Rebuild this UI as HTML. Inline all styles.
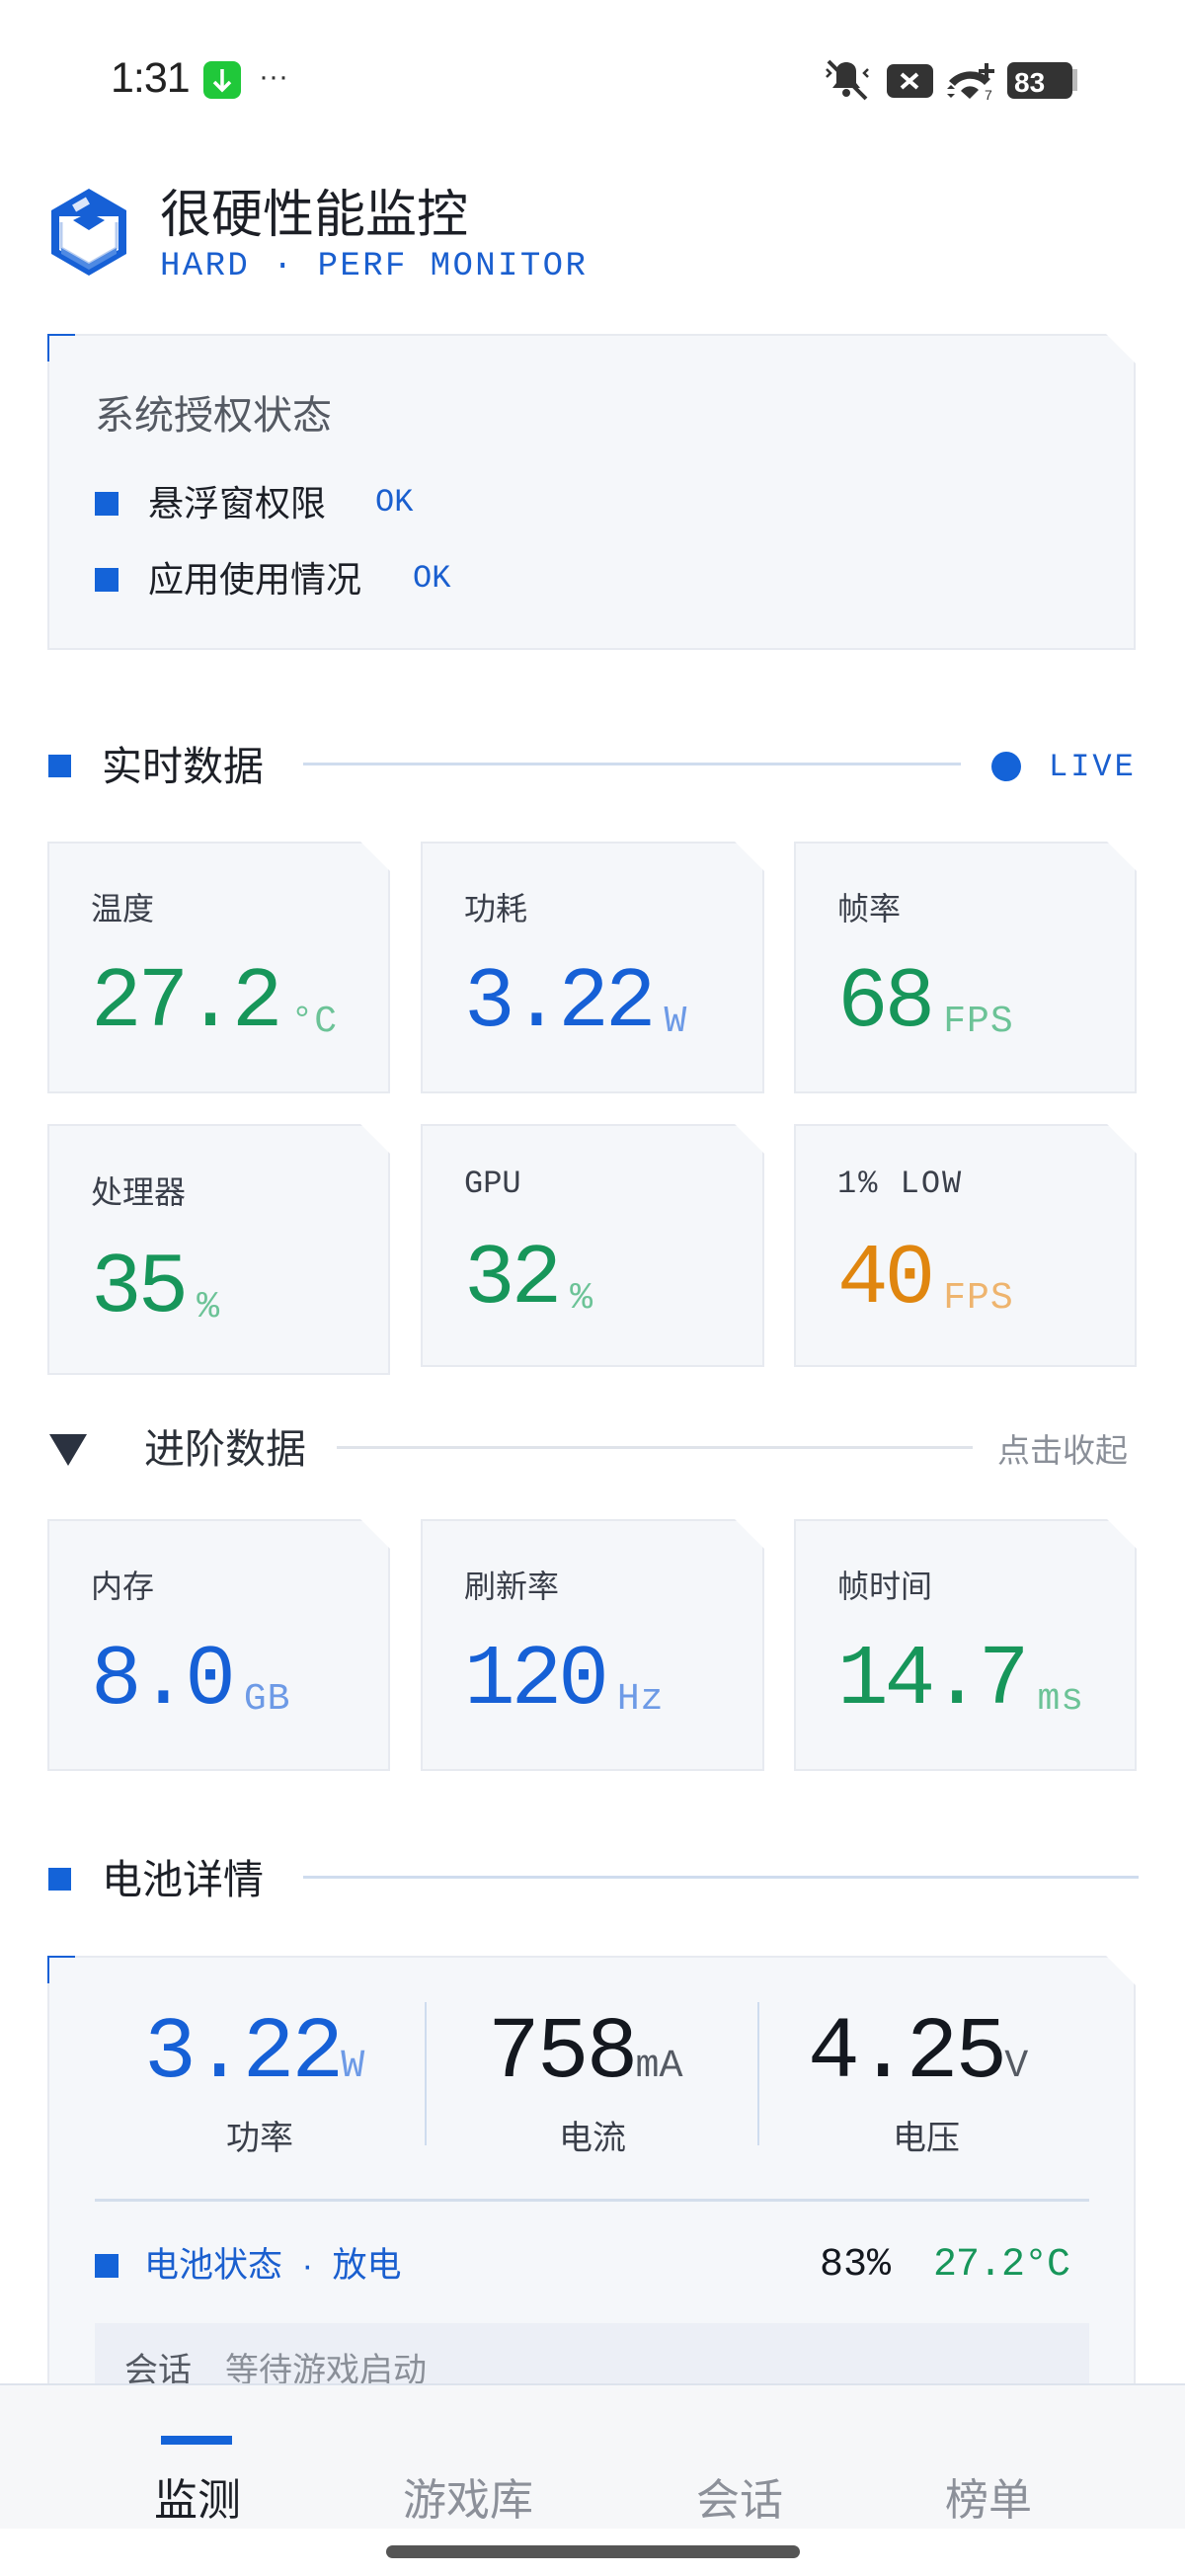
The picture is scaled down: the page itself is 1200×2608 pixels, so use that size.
<!DOCTYPE html>
<html><head><meta charset="utf-8">
<style>
*{margin:0;padding:0;box-sizing:border-box}
body{width:1200px;height:2608px;background:#fff;position:relative;overflow:hidden;font-family:"Liberation Sans","Noto Sans CJK SC",sans-serif;color:#1c1f26;line-height:1.2}
.a{position:absolute}
.mono{font-family:"Liberation Mono","Noto Sans CJK SC",monospace}
.card{position:absolute;background:#f5f7fa;border:2px solid #e7eaf0;clip-path:polygon(0 0,calc(100% - 30px) 0,100% 30px,100% 100%,0 100%)}
.lbl{position:absolute;left:42px;top:47px;font-size:32px;color:#3a3f4a}
.val{position:absolute;left:42px;top:118px;font-size:86px;letter-spacing:-4px;line-height:1;white-space:nowrap;font-family:"Liberation Mono",monospace}
.val span{font-size:38px;letter-spacing:1px;margin-left:12px;position:relative;top:6px}
.g{color:#17965a}.g span{color:#6cc397}
.b{color:#1660d6}.b span{color:#6d9ae6}
.o{color:#e0860f}.o span{color:#eeb46e}
.sq{position:absolute;background:#1463d8}
</style></head><body>
<!-- status bar -->
<div class="a" style="left:112px;top:54px;font-size:43px;color:#222;letter-spacing:-1px">1:31</div>
<div class="a" style="left:206px;top:62px;width:38px;height:38px;border-radius:8px;background:#20c83a"></div>
<svg class="a" style="left:206px;top:62px" width="38" height="38"><path d="M19 8v21M11 21l8 8 8-8" stroke="#fff" stroke-width="3.5" fill="none"/></svg>
<div class="a" style="left:262px;top:60px;font-size:30px;color:#333">···</div>
<svg class="a" style="left:835px;top:60px" width="260" height="42">
<path d="M12 12c0-6 5-9 10-9s10 3 10 9v12l4 5H8l4-5z" fill="#333"/><circle cx="22" cy="34" r="4" fill="#333"/><path d="M4 2l38 38" stroke="#333" stroke-width="4"/><path d="M2 10l4 4-4 4M44 10l-4 4 4 4" stroke="#333" stroke-width="2.5" fill="none"/>
<rect x="63" y="5" width="47" height="34" rx="7" fill="#333"/><path d="M78 15l16 14M94 15L78 29" stroke="#fff" stroke-width="4"/>
<path d="M126 22a30 30 0 0 1 42-2l-6 6a20 20 0 0 0-30 1zM138 32a12 12 0 0 1 18-1l-9 9z" fill="#333"/><path d="M164 4v16M156 12h16" stroke="#333" stroke-width="4"/><text x="162" y="41" font-size="14" fill="#333" font-family="Liberation Sans">7</text><path d="M124 30l4-4 4 4zM124 35l4 4 4-4z" fill="#333"/>
<rect x="185" y="3" width="66" height="37" rx="7" fill="#333"/><rect x="251" y="10" width="5" height="22" fill="#bbb"/><text x="192" y="33" font-size="28" font-weight="bold" fill="#fff" font-family="Liberation Sans">83</text>
</svg>
<!-- header -->
<svg class="a" style="left:50px;top:189px" width="80" height="92" viewBox="0 0 80 92">
<path d="M40 2L78 24V68L40 90L2 68V24Z" fill="#1660d6"/>
<path d="M40 30L70 30V64L40 80L10 64V30Z" fill="#fff"/>
<path d="M12 36v26l28 16 28-16V36" stroke="#b8cdf0" stroke-width="3" fill="none"/>
<path d="M12 62l28 16 28-16v6l-28 16-28-16z" fill="#4f8ae3"/>
<rect x="24" y="14" width="16" height="8" fill="#dbe6fa" transform="rotate(-30 32 18)"/>
<path d="M40 44L24 34 40 26 56 34z" fill="#1660d6"/>
</svg>
<div class="a" style="left:162px;top:187px;font-size:52px;color:#1c1f26">很硬性能监控</div>
<div class="a mono" style="left:162px;top:250px;font-size:34px;color:#1a5fcf;letter-spacing:2.4px">HARD · PERF MONITOR</div>
<!-- auth card -->
<div class="card" style="left:48px;top:338px;width:1102px;height:320px"></div>
<div class="a" style="left:48px;top:338px;width:28px;height:28px;border-left:2px solid #1660d6;border-top:2px solid #1660d6"></div>
<div class="a" style="left:96px;top:397px;font-size:40px;color:#555a63">系统授权状态</div>
<div class="sq" style="left:96px;top:498px;width:24px;height:24px"></div>
<div class="a" style="left:150px;top:488px;font-size:36px">悬浮窗权限</div>
<div class="a mono" style="left:380px;top:490px;font-size:32px;color:#1a5fcf">OK</div>
<div class="sq" style="left:96px;top:575px;width:24px;height:24px"></div>
<div class="a" style="left:150px;top:565px;font-size:36px">应用使用情况</div>
<div class="a mono" style="left:418px;top:567px;font-size:32px;color:#1a5fcf">OK</div>
<!-- realtime -->
<div class="sq" style="left:49px;top:764px;width:23px;height:23px"></div>
<div class="a" style="left:103px;top:752px;font-size:41px">实时数据</div>
<div class="a" style="left:307px;top:772px;width:666px;height:3px;background:#cfdcee"></div>
<div class="a" style="left:1004px;top:761px;width:30px;height:30px;border-radius:50%;background:#1463d8"></div>
<div class="a mono" style="left:1062px;top:758px;font-size:32px;color:#1a5fcf;letter-spacing:3px">LIVE</div>

<div class="card" style="left:48px;top:852px;width:347px;height:255px"><div class="lbl">温度</div><div class="val g">27.2<span>°C</span></div></div>
<div class="card" style="left:426px;top:852px;width:348px;height:255px"><div class="lbl">功耗</div><div class="val b">3.22<span>W</span></div></div>
<div class="card" style="left:804px;top:852px;width:347px;height:255px"><div class="lbl">帧率</div><div class="val g">68<span>FPS</span></div></div>
<div class="card" style="left:48px;top:1138px;width:347px;height:254px"><div class="lbl" style="top:48px">处理器</div><div class="val g" style="top:121px">35<span>%</span></div></div>
<div class="card" style="left:426px;top:1138px;width:348px;height:246px"><div class="lbl mono" style="top:40px">GPU</div><div class="val g" style="top:112px">32<span>%</span></div></div>
<div class="card" style="left:804px;top:1138px;width:347px;height:246px"><div class="lbl mono" style="top:40px;letter-spacing:2px">1% LOW</div><div class="val o" style="top:112px">40<span>FPS</span></div></div>
<!-- advanced -->
<svg class="a" style="left:50px;top:1452px" width="38" height="32"><path d="M0 0h38L19 32z" fill="#2b3240"/></svg>
<div class="a" style="left:146px;top:1443px;font-size:41px;color:#2b3038">进阶数据</div>
<div class="a" style="left:341px;top:1464px;width:644px;height:3px;background:#dfe3ea"></div>
<div class="a" style="left:1010px;top:1449px;font-size:33px;color:#8a8f98">点击收起</div>
<div class="card" style="left:48px;top:1538px;width:347px;height:255px"><div class="lbl">内存</div><div class="val b">8.0<span>GB</span></div></div>
<div class="card" style="left:426px;top:1538px;width:348px;height:255px"><div class="lbl">刷新率</div><div class="val b">120<span>Hz</span></div></div>
<div class="card" style="left:804px;top:1538px;width:347px;height:255px"><div class="lbl">帧时间</div><div class="val g">14.7<span>ms</span></div></div>
<!-- battery -->
<div class="sq" style="left:49px;top:1891px;width:23px;height:23px"></div>
<div class="a" style="left:103px;top:1879px;font-size:41px">电池详情</div>
<div class="a" style="left:307px;top:1899px;width:846px;height:3px;background:#cfdcee"></div>
<div class="card" style="left:48px;top:1980px;width:1102px;height:500px"></div>
<div class="a" style="left:48px;top:1980px;width:28px;height:28px;border-left:2px solid #1660d6;border-top:2px solid #1660d6"></div>
<div class="a" style="left:430px;top:2027px;width:2px;height:145px;background:#cfdcee"></div>
<div class="a" style="left:767px;top:2027px;width:2px;height:145px;background:#cfdcee"></div>
<div class="a mono" style="left:146px;top:2036px;font-size:88px;letter-spacing:-3px;line-height:1;color:#1660d6">3.22<span style="font-size:40px;color:#6d9ae6;letter-spacing:0">W</span></div>
<div class="a mono" style="left:494px;top:2036px;font-size:88px;letter-spacing:-3px;line-height:1;color:#14181f">758<span style="font-size:40px;color:#555a63;letter-spacing:0">mA</span></div>
<div class="a mono" style="left:818px;top:2036px;font-size:88px;letter-spacing:-3px;line-height:1;color:#14181f">4.25<span style="font-size:40px;color:#555a63;letter-spacing:0">V</span></div>
<div class="a" style="left:229px;top:2145px;font-size:34px;color:#3a3f4a">功率</div>
<div class="a" style="left:566px;top:2145px;font-size:34px;color:#3a3f4a">电流</div>
<div class="a" style="left:904px;top:2145px;font-size:34px;color:#3a3f4a">电压</div>
<div class="a" style="left:96px;top:2226px;width:1007px;height:3px;background:#d3deec"></div>
<div class="sq" style="left:96px;top:2282px;width:24px;height:24px"></div>
<div class="a" style="left:146px;top:2273px;font-size:35px;color:#1a5fcf;white-space:pre">电池状态  ·  放电</div>
<div class="a mono" style="left:830px;top:2270px;font-size:40px;color:#14181f">83%</div>
<div class="a mono" style="left:945px;top:2270px;font-size:40px;color:#17965a;letter-spacing:-1px">27.2°C</div>
<div class="a" style="left:96px;top:2352px;width:1007px;height:70px;background:#eceff6"></div>
<div class="a" style="left:126px;top:2380px;font-size:34px;color:#555a63">会话　<span style="color:#8a8f98">等待游戏启动</span></div>
<!-- nav -->
<div class="a" style="left:0;top:2413px;width:1200px;height:147px;background:#f6f7f9;border-top:2px solid #dde3ec"></div>
<div class="a" style="left:163px;top:2466px;width:72px;height:9px;background:#1463d8"></div>
<div class="a" style="left:156px;top:2506px;font-size:44px;color:#1c1f26">监测</div>
<div class="a" style="left:408px;top:2506px;font-size:44px;color:#8c9099">游戏库</div>
<div class="a" style="left:705px;top:2506px;font-size:44px;color:#8c9099">会话</div>
<div class="a" style="left:957px;top:2506px;font-size:44px;color:#8c9099">榜单</div>
<div class="a" style="left:391px;top:2577px;width:419px;height:13px;border-radius:7px;background:#555"></div>
</body></html>
